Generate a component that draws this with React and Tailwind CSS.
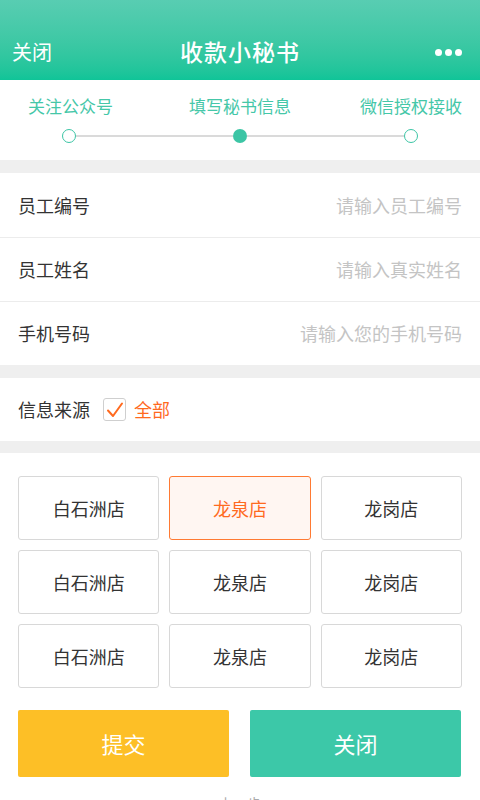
import { useState } from "react";

const font = { fontFamily: '"Noto Sans CJK SC", "Noto Sans", sans-serif' };

const fields = [
  { label: "员工编号", placeholder: "请输入员工编号" },
  { label: "员工姓名", placeholder: "请输入真实姓名" },
  { label: "手机号码", placeholder: "请输入您的手机号码" },
];

const stores = ["白石洲店", "龙泉店", "龙岗店", "白石洲店", "龙泉店", "龙岗店", "白石洲店", "龙泉店", "龙岗店"];

const App = () => {
  const [selected, setSelected] = useState(1);
  const [all, setAll] = useState(true);
  return (
    <div className="w-[480px] min-h-[800px] bg-white overflow-hidden" style={font}>
      <div className="h-[80px] bg-gradient-to-b from-[#58cdb2] to-[#0fc498] flex items-end pb-[14px] px-3 relative">
        <span className="text-white text-[20px] leading-[28px]">关闭</span>
        <span className="absolute left-0 right-0 bottom-[15px] text-center text-white text-[23px] leading-[28px] font-medium tracking-[1px]">
          收款小秘书
        </span>
        <div className="ml-auto flex gap-[3px] mb-[10px] mr-[6px]">
          <span className="w-[7px] h-[7px] rounded-full bg-white" />
          <span className="w-[7px] h-[7px] rounded-full bg-white" />
          <span className="w-[7px] h-[7px] rounded-full bg-white" />
        </div>
      </div>

      <div className="h-[80px] pt-[14px]">
        <div className="grid grid-cols-3 text-[17px] leading-[24px] text-[#45c7a8]">
          <span className="pl-[28px]">关注公众号</span>
          <span className="text-center">填写秘书信息</span>
          <span className="text-right pr-[18px] whitespace-nowrap">微信授权接收</span>
        </div>
        <div className="mt-[11px] mx-[62px] flex items-center">
          <span className="w-[14px] h-[14px] rounded-full border-[1.5px] border-[#3cc5a5] bg-white shrink-0" />
          <span className="flex-1 h-[2px] bg-[#dadada]" />
          <span className="w-[14px] h-[14px] rounded-full bg-[#3cc5a5] shrink-0" />
          <span className="flex-1 h-[2px] bg-[#dadada]" />
          <span className="w-[14px] h-[14px] rounded-full border-[1.5px] border-[#3cc5a5] bg-white shrink-0" />
        </div>
      </div>

      <div className="h-[13px] bg-[#efefef]" />

      <div>
        {fields.map((f, i) => (
          <div
            key={f.label}
            className={`h-[64px] flex items-center justify-between px-[18px] ${i > 0 ? "border-t border-[#ececec]" : ""}`}
          >
            <span className="text-[18px] text-[#333]">{f.label}</span>
            <input
              className="text-right text-[18px] text-[#333] placeholder:text-[#c4c4c4] outline-none w-[240px] bg-transparent"
              style={font}
              placeholder={f.placeholder}
            />
          </div>
        ))}
      </div>

      <div className="h-[13px] bg-[#efefef]" />

      <div className="h-[63px] flex items-center px-[18px]">
        <span className="text-[18px] text-[#333]">信息来源</span>
        <button
          onClick={() => setAll(!all)}
          className="ml-[13px] w-[23px] h-[23px] rounded-[3px] border border-[#cfcfcf] flex items-center justify-center bg-white"
        >
          {all && (
            <svg width="18" height="16" viewBox="0 0 18 16" fill="none">
              <path d="M2 8.5 L7 14 L16 1.5" stroke="#ff6a1f" strokeWidth="2" strokeLinecap="round" strokeLinejoin="round" />
            </svg>
          )}
        </button>
        <span className="ml-[8px] text-[18px] text-[#ff6a1f]">全部</span>
      </div>

      <div className="h-[12px] bg-[#efefef]" />

      <div className="px-[18px] pt-[23px] grid grid-cols-3 gap-[10px]">
        {stores.map((s, i) => (
          <button
            key={i}
            onClick={() => setSelected(i)}
            className={`h-[64px] rounded-[3px] border text-[18px] ${
              selected === i
                ? "border-[#ff7a33] bg-[#fff6f2] text-[#ff6a1f]"
                : "border-[#d8d8d8] bg-white text-[#333]"
            }`}
            style={font}
          >
            {s}
          </button>
        ))}
      </div>

      <div className="px-[18px] pt-[22px] flex gap-[21px]">
        <button className="w-[211px] h-[67px] rounded-[2px] bg-[#fdbf26] text-white text-[22px]" style={font}>
          提交
        </button>
        <button className="w-[211px] h-[67px] rounded-[2px] bg-[#3cc8a8] text-white text-[22px]" style={font}>
          关闭
        </button>
      </div>

      <div className="pt-[16px] text-center text-[14px] text-[#aaa]">上一步</div>
    </div>
  );
};

export default App;
